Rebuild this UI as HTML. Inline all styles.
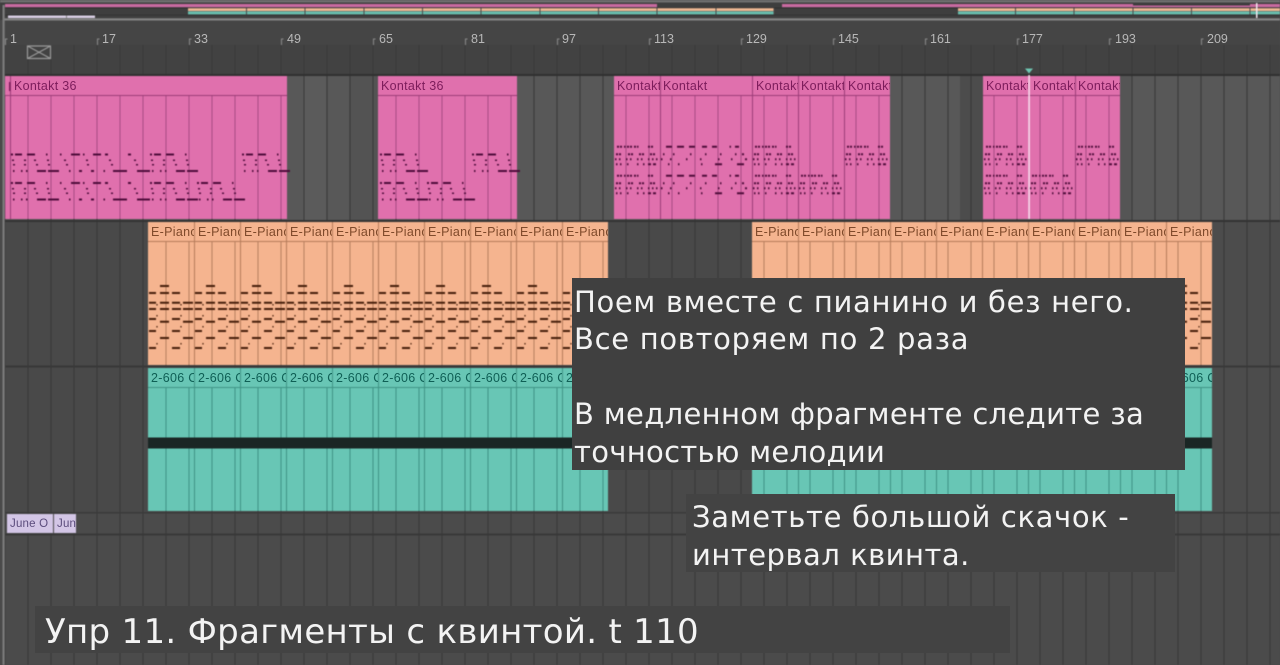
<!DOCTYPE html>
<html lang="ru"><head><meta charset="utf-8"><title>Упр 11</title>
<style>
html,body{margin:0;padding:0;background:#4a4a4a}
#r{position:relative;width:1280px;height:665px;overflow:hidden;background:#4a4a4a}
svg{position:absolute;left:0;top:0;filter:blur(.45px)}
.t{position:absolute;height:19px;overflow:hidden;white-space:nowrap;font:12.5px/20px "Liberation Sans",sans-serif;letter-spacing:.3px;padding-left:3px;box-sizing:border-box;filter:blur(.25px)}
.k{color:#7c1c5b;top:76px}
.e{color:#7f4a2b;top:222px}
.g{color:#0f5f55;top:368px}
.j{color:#5b4c7c;top:514px;font-size:11.500px;letter-spacing:.2px}
.n{position:absolute;top:32px;font:12.500px/14px "Liberation Sans",sans-serif;color:#b8b8b8;filter:blur(.25px)}
.b{position:absolute}
.x{position:absolute;font:29px/37.500px "DejaVu Sans","Liberation Sans",sans-serif;color:#f3f3f3;white-space:nowrap;filter:blur(.25px)}
</style></head><body><div id="r">
<svg width="1280" height="665" viewBox="0 0 1280 665">
<defs>
<pattern id="gd" x="4.500" y="0" width="23" height="10" patternUnits="userSpaceOnUse"><rect x="0" width="1" height="10" fill="#383838"/></pattern>
<pattern id="gp" x="4.500" y="0" width="23" height="10" patternUnits="userSpaceOnUse"><rect x="0" width="1" height="10" fill="#a84b84"/></pattern>
<pattern id="gs" x="4.500" y="0" width="23" height="10" patternUnits="userSpaceOnUse"><rect x="0" width="1" height="10" fill="#b57f5f"/></pattern>
<pattern id="gt" x="4.500" y="0" width="23" height="10" patternUnits="userSpaceOnUse"><rect x="0" width="1" height="10" fill="#3f9385"/></pattern>
<g id="M" fill="none" stroke="#4e0c3a" stroke-width="2">
<path d="M0 0h2M4 0h7M16 0h8M35 0h1.500M2 5v1.500M14 5v1.500M24 5v1.500M37 5v1.500M3 9.500v1.500M14 9.500v1.500M26 9.500v1.500M38 9.500v1.500M2 16.500h1.500M10 16.500h1.500M15 16.500h1.500M26 16.500h9M37 16.500h11"/>
</g>
<g id="D" fill="none" stroke="#4e0c3a" stroke-width="2">
<path d="M0 0h1.500M11 0h9M23 0h1.500M33 0h8M45 0h3M68 0h3M5 5v1.500M27 5v1.500M50 5v1.500M75 5v1.500M7 9.500v1.500M28 9.500v1.500M52 9.500v1.500M77 9.500v1.500M9 16.500h1.500M19 16.500h3M31 16.500h3M43.500 16.500h1.500M53 16.500h14M77 16.500h13"/>
</g>
<g id="S" fill="none" stroke="#4e0c3a" stroke-width="2">
<path d="M2 0h2M5 0h2M9 0h1.500M12 0h2M15 0h2M19 0h2M22 0h1.500M33 0h2M36 0h2M1 7.500h2M4 7.500h2M13 7.500h2M16 7.500h2M24 7.500h2M27 7.500h2M35 7.500h2M38 7.500h2M0 12.500h1.500M4 12.500h1.500M11 12.500h1.500M15 12.500h1.500M22 12.500h1.500M26 12.500h1.500M33 12.500h1.500M37 12.500h1.500M41 12.500h1.500M1 17.500h1.500M5 17.500h1.500M12 17.500h1.500M22 17.500h1.500M28 17.500h1.500M33 17.500h3M38 17.500h3"/>
</g>
<g id="D2" fill="none" stroke="#4e0c3a" stroke-width="2">
<path d="M6 0h6M17 0h7M29 0h6M42 0h5M52 0h5M69.500 0h1.500M75 0h4M3 7.500h1.500M13 7.500h1.500M30 7.500h1.500M45 7.500h1.500M60 7.500h1.500M75 7.500h1.500M82 7.500h2M1 12.500h1.500M10 12.500h1.500M26 12.500h1.500M40 12.500h1.500M58 12.500h1.500M71 12.500h1.500M85 12.500h2M8 17.500h1.500M18 17.500h1.500M41 17.500h1.500M55 17.500h7M77 17.500h7"/>
</g>
<g id="P" fill="none" stroke="#451e0a" stroke-width="2">
<path d="M12 286h9M1 293h7M12 293h9M24 293h8M1 302.700h7M12 302.700h9M24 302.700h8M35 302.700h10M1 309h7M12 309h9M24 309h9M35 309h10M1 319h7M24 319h8M12 321.700h9M35 321.700h10M1 331h7M24 331h8M12 338h9M35 338h10M1 348h7M24 348h8"/>
<path stroke-width="1.200" d="M9 304v1.500M33 304v1.500M9 315v1.500M33 315v1.500M9 326v1.500M33 326v1.500M9 343v1.500M33 343v1.500"/>
</g>
</defs>

<!-- overview -->
<rect width="1280" height="20" fill="#3e3e3e"/>
<rect width="1280" height="2.500" fill="#6f6f6f"/>
<rect x="5" y="7.500" width="1275" height="1" fill="#2f2f2f"/>
<rect x="5" y="14.500" width="1275" height="1" fill="#333"/>
<rect x="5" y="4" width="652" height="3.200" fill="#c96aa0"/>
<rect x="782" y="4" width="498" height="3.200" fill="#c96aa0"/>
<rect x="188" y="8.200" width="586" height="2.800" fill="#efb993"/>
<rect x="188" y="11.400" width="586" height="3" fill="#69bfae"/>
<rect x="958" y="8.200" width="322" height="2.800" fill="#efb993"/>
<rect x="958" y="11.400" width="322" height="3" fill="#69bfae"/>
<path d="M246.500 8v6.500M305 8v6.500M364 8v6.500M422.500 8v6.500M481 8v6.500M540 8v6.500M598.500 8v6.500M657 8v6.500M716 8v6.500M774 8v6.500M1015.500 8v6.500M1074 8v6.500M1133 8v6.500M1191.500 8v6.500M1250 8v6.500" stroke="#4a4a4a" stroke-width="1"/>
<rect x="1133" y="4" width="117" height="1.500" fill="#3b3b3b"/>
<rect x="8" y="15.500" width="87" height="2.500" fill="#d9cfe4"/>
<rect x="66" y="15.500" width="1" height="2.500" fill="#888"/>
<rect x="3" y="18.300" width="1277" height="2.300" fill="#858585"/>
<rect x="1256" y="3" width="1.500" height="15" fill="#f2e6ee"/>

<!-- ruler -->
<rect y="20.500" width="1280" height="24.500" fill="#454545"/>
<rect y="45" width="1280" height="30" fill="#424242"/>
<rect y="45" width="1280" height="30" fill="url(#gd)"/>
<path d="M5.500 45v-6h2M97.500 45v-6h2M189.500 45v-6h2M281.500 45v-6h2M373.500 45v-6h2M465.500 45v-6h2M557.500 45v-6h2M649.500 45v-6h2M741.500 45v-6h2M833.500 45v-6h2M925.500 45v-6h2M1017.500 45v-6h2M1109.500 45v-6h2M1201.500 45v-6h2" stroke="#8a8a8a" fill="none" stroke-width="1"/>
<rect x="27.500" y="46" width="23" height="12.500" fill="none" stroke="#9c9c9c" stroke-width="1.200"/>
<path d="M27.500 46L50.500 58.500M50.500 46L27.500 58.500" stroke="#9c9c9c" stroke-width="1"/>
<rect y="74" width="1280" height="2" fill="#303030"/>

<!-- lanes -->
<rect y="76" width="1280" height="144.500" fill="#585858"/>
<rect x="303" y="76" width="23" height="144.500" fill="#5b5b5b"/>
<rect x="349" y="76" width="29" height="144.500" fill="#535353"/>
<rect x="1120" y="76" width="12" height="144.500" fill="#555"/>
<rect x="960" y="76" width="23" height="144.500" fill="#4c4c4c"/>
<rect y="221" width="1280" height="291" fill="#494949"/>
<rect x="1212" y="222" width="68" height="290" fill="#4c4c4c"/>
<rect y="512" width="1280" height="153" fill="#4b4b4b"/>
<rect y="76" width="1280" height="589" fill="url(#gd)"/>
<rect y="220" width="1280" height="2" fill="#333"/>
<rect y="365.500" width="1280" height="2" fill="#383838"/>
<rect y="512" width="1280" height="1.500" fill="#3a3a3a"/>
<rect y="533.500" width="1280" height="2" fill="#383838"/>

<!-- pink clips -->
<g fill="#e070ad">
<rect x="5" y="76" width="282" height="143"/><rect x="378" y="76" width="139" height="143"/><rect x="614" y="76" width="276" height="143"/><rect x="983" y="76" width="137" height="143"/>
</g>
<g fill="url(#gp)">
<rect x="5" y="95" width="282" height="124"/><rect x="378" y="95" width="139" height="124"/><rect x="614" y="95" width="276" height="124"/><rect x="983" y="95" width="137" height="124"/>
</g>
<g fill="#9c3c78">
<rect x="5" y="95" width="282" height="1"/><rect x="378" y="95" width="139" height="1"/><rect x="614" y="95" width="276" height="1"/><rect x="983" y="95" width="137" height="1"/>
<rect x="660" y="76" width="1" height="143"/><rect x="752" y="76" width="1" height="143"/><rect x="798" y="76" width="1" height="143"/><rect x="844" y="76" width="1" height="143"/><rect x="1075" y="76" width="1" height="143"/>
<rect x="10" y="76" width="1" height="143"/>
</g>
<rect x="9" y="82" width="1.500" height="9" fill="#7c1c5b"/>
<use href="#M" x="11" y="154.500"/><use href="#D" x="60" y="154.500"/><use href="#M" x="150" y="154.500"/><use href="#M" x="242" y="154.500"/>
<use href="#M" x="11" y="183"/><use href="#D" x="60" y="183"/><use href="#M" x="150" y="183"/><use href="#M" x="197" y="183"/>
<use href="#M" x="380" y="154.500"/><use href="#M" x="472" y="154.500"/>
<use href="#M" x="380" y="183"/><use href="#M" x="427" y="183"/>
<use href="#S" x="615" y="146.700"/><use href="#S" x="615" y="175.700"/>
<use href="#D2" x="660" y="146.700"/><use href="#D2" x="660" y="175.700"/>
<use href="#S" x="753" y="146.700"/><use href="#S" x="753" y="175.700"/>
<use href="#S" x="799" y="175.700"/><use href="#S" x="845" y="146.700"/>
<use href="#S" x="984" y="146.700"/><use href="#S" x="984" y="175.700"/>
<use href="#S" x="1030" y="175.700"/><use href="#S" x="1076" y="146.700"/>

<!-- peach clips -->
<g fill="#f5b48f">
<rect x="148" y="222" width="460" height="143"/><rect x="752" y="222" width="460" height="143"/>
</g>
<g fill="url(#gs)">
<rect x="148" y="241" width="460" height="124"/><rect x="752" y="241" width="460" height="124"/>
</g>
<g fill="#b57b5a">
<rect x="148" y="241" width="460" height="1"/><rect x="752" y="241" width="460" height="1"/>
<path d="M194 222h1v143h-1zM240 222h1v143h-1zM286 222h1v143h-1zM332 222h1v143h-1zM378 222h1v143h-1zM424 222h1v143h-1zM470 222h1v143h-1zM516 222h1v143h-1zM562 222h1v143h-1zM798 222h1v143h-1zM844 222h1v143h-1zM890 222h1v143h-1zM936 222h1v143h-1zM982 222h1v143h-1zM1028 222h1v143h-1zM1074 222h1v143h-1zM1120 222h1v143h-1zM1166 222h1v143h-1z"/>
</g>
<use href="#P" x="148"/><use href="#P" x="194"/><use href="#P" x="240"/><use href="#P" x="286"/><use href="#P" x="332"/><use href="#P" x="378"/><use href="#P" x="424"/><use href="#P" x="470"/><use href="#P" x="516"/><use href="#P" x="562"/>
<use href="#P" x="1166"/>

<!-- teal clips -->
<g fill="#68c6b5">
<rect x="148" y="368" width="460" height="143"/><rect x="752" y="368" width="460" height="143"/>
</g>
<g fill="url(#gt)">
<rect x="148" y="387" width="460" height="124"/><rect x="752" y="387" width="460" height="124"/>
</g>
<g fill="#3f9385">
<rect x="148" y="387" width="460" height="1"/><rect x="752" y="387" width="460" height="1"/>
<path d="M194 368h1v143h-1zM240 368h1v143h-1zM286 368h1v143h-1zM332 368h1v143h-1zM378 368h1v143h-1zM424 368h1v143h-1zM470 368h1v143h-1zM516 368h1v143h-1zM562 368h1v143h-1zM798 368h1v143h-1zM844 368h1v143h-1zM890 368h1v143h-1zM936 368h1v143h-1zM982 368h1v143h-1zM1028 368h1v143h-1zM1074 368h1v143h-1zM1120 368h1v143h-1zM1166 368h1v143h-1z"/>
</g>
<rect x="148" y="437.500" width="460" height="11" fill="#1a2624"/>
<rect x="752" y="437.500" width="460" height="11" fill="#1a2624"/>

<!-- june clips -->
<rect x="7" y="514" width="46" height="19" fill="#d3c6e6"/>
<rect x="54" y="514" width="22" height="19" fill="#d3c6e6"/>

<!-- left edge -->
<rect x="0" y="20" width="2.500" height="645" fill="#4a4a4a"/>
<rect x="2.500" y="5" width="2.200" height="660" fill="#7c7c7c"/>

<!-- playhead -->
<rect x="1028.300" y="75" width="1.600" height="144" fill="#f6dcec"/>
<path d="M1025 68.500h8l-4 5z" fill="#6fc7b3"/>
</svg>

<div class="n" style="left:10px">1</div><div class="n" style="left:102px">17</div><div class="n" style="left:194px">33</div><div class="n" style="left:287px">49</div><div class="n" style="left:379px">65</div><div class="n" style="left:471px">81</div><div class="n" style="left:562px">97</div><div class="n" style="left:654px">113</div><div class="n" style="left:746px">129</div><div class="n" style="left:838px">145</div><div class="n" style="left:930px">161</div><div class="n" style="left:1022px">177</div><div class="n" style="left:1115px">193</div><div class="n" style="left:1207px">209</div>

<div class="t k" style="left:11px;width:276px">Kontakt 36</div>
<div class="t k" style="left:378px;width:139px">Kontakt 36</div>
<div class="t k" style="left:614px;width:46px">Kontakt</div>
<div class="t k" style="left:660px;width:92px">Kontakt</div>
<div class="t k" style="left:753px;width:45px">Kontakt</div>
<div class="t k" style="left:798px;width:46px">Kontakt</div>
<div class="t k" style="left:845px;width:45px">Kontakt</div>
<div class="t k" style="left:983px;width:45px">Kontakt</div>
<div class="t k" style="left:1030px;width:45px">Kontakt</div>
<div class="t k" style="left:1075px;width:45px">Kontakt</div>

<div class="t e" style="left:148px;width:46px">E-Piano</div><div class="t e" style="left:195px;width:45px">E-Piano</div><div class="t e" style="left:241px;width:45px">E-Piano</div><div class="t e" style="left:287px;width:45px">E-Piano</div><div class="t e" style="left:333px;width:45px">E-Piano</div><div class="t e" style="left:379px;width:45px">E-Piano</div><div class="t e" style="left:425px;width:45px">E-Piano</div><div class="t e" style="left:471px;width:45px">E-Piano</div><div class="t e" style="left:517px;width:45px">E-Piano</div><div class="t e" style="left:563px;width:45px">E-Piano</div>
<div class="t e" style="left:752px;width:46px">E-Piano</div><div class="t e" style="left:799px;width:45px">E-Piano</div><div class="t e" style="left:845px;width:45px">E-Piano</div><div class="t e" style="left:891px;width:45px">E-Piano</div><div class="t e" style="left:937px;width:45px">E-Piano</div><div class="t e" style="left:983px;width:45px">E-Piano</div><div class="t e" style="left:1029px;width:45px">E-Piano</div><div class="t e" style="left:1075px;width:45px">E-Piano</div><div class="t e" style="left:1121px;width:45px">E-Piano</div><div class="t e" style="left:1167px;width:45px">E-Piano</div>

<div class="t g" style="left:148px;width:46px">2-606 C</div><div class="t g" style="left:195px;width:45px">2-606 C</div><div class="t g" style="left:241px;width:45px">2-606 C</div><div class="t g" style="left:287px;width:45px">2-606 C</div><div class="t g" style="left:333px;width:45px">2-606 C</div><div class="t g" style="left:379px;width:45px">2-606 C</div><div class="t g" style="left:425px;width:45px">2-606 C</div><div class="t g" style="left:471px;width:45px">2-606 C</div><div class="t g" style="left:517px;width:45px">2-606 C</div><div class="t g" style="left:563px;width:45px">2-606 C</div>
<div class="t g" style="left:1167px;width:45px">2-606 C</div>

<div class="t j" style="left:7px;width:46px">June O</div>
<div class="t j" style="left:54px;width:22px">June O</div>

<div class="b" style="left:572px;top:278px;width:613px;height:192px;background:#404040"></div>
<div class="b" style="left:686px;top:494px;width:489px;height:78px;background:#434343"></div>
<div class="b" style="left:35px;top:606px;width:975px;height:47px;background:#434343"></div>

<div class="x" style="left:574px;top:283.500px;letter-spacing:.68px">Поем вместе с пианино и без него.</div>
<div class="x" style="left:574px;top:321px;letter-spacing:.7px">Все повторяем по 2 раза</div>
<div class="x" style="left:574px;top:396px;letter-spacing:.34px">В медленном фрагменте следите за</div>
<div class="x" style="left:574px;top:433.500px;letter-spacing:.32px">точностью мелодии</div>
<div class="x" style="left:692px;top:499px;letter-spacing:.66px">Заметьте большой скачок -</div>
<div class="x" style="left:692px;top:536.500px;letter-spacing:.5px">интервал квинта.</div>
<div class="x" style="left:45px;top:613.500px;font-size:34px;letter-spacing:.3px">Упр 11. Фрагменты с квинтой. t 110</div>
</div></body></html>
